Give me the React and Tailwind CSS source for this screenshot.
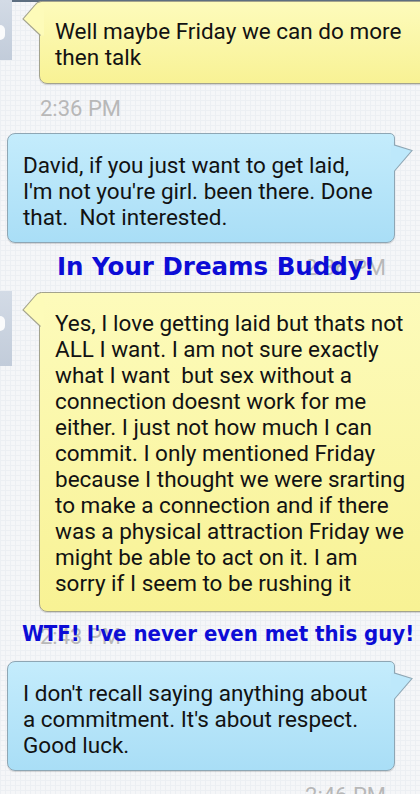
import React from 'react';

const textFont = { fontFamily: 'Roboto, "Noto Sans", sans-serif' };

const Avatar = ({ h, headTop }) => (
    <div className={`relative w-[12px] shrink-0 bg-gradient-to-b from-[#d3dbe6] to-[#c2ccda] ${h}`}>
        <div className={`absolute left-0 w-[5px] h-[15px] rounded-r-full bg-white/90 ${headTop}`}></div>
    </div>
);

// incoming message, yellow bubble with a tail on the left
const YellowBubble = ({ lines, avatarH, headTop, pad }) => (
    <div className="flex items-start">
        <Avatar h={avatarH} headTop={headTop} />
        <div className={`relative ml-[27px] mr-[-12px] flex-1 rounded-[8px] rounded-tl-[3px] border border-[#a3a38d] bg-gradient-to-b from-[#fdfbbb] to-[#f8f294] pl-[15px] pr-4 shadow-[0_1px_1px_rgba(0,0,0,0.15)] ${pad}`}>
            <svg className="absolute left-[-18px] top-[-1px]" width="22" height="40" viewBox="0 0 22 40">
                <path d="M22 1 L19 1 Q15 1 13 4 L1 18 L18.5 34.5 L22 34.5 Z" fill="#fdfbb9" />
                <path d="M19 0.5 Q15 0.8 13 4 L1 18 L18.5 34.5" fill="none" stroke="#a3a38d" strokeWidth="1.1" />
            </svg>
            <p className="text-[22.5px] leading-[26px] text-[#121212]" style={textFont}>
                {lines.map((l, i) => <span key={i} className="block whitespace-pre">{l}</span>)}
            </p>
        </div>
    </div>
);

// outgoing message, blue bubble with a tail on the right
const BlueBubble = ({ lines }) => (
    <div className="flex">
        <div className="relative ml-[7px] w-[388px] rounded-[8px] rounded-tr-[5px] border border-[#8ea6b4] bg-gradient-to-b from-[#c4ecfc] to-[#a9def6] pl-[15px] pr-3 pt-[18px] pb-[12px] shadow-[0_1px_1px_rgba(0,0,0,0.15)]">
            <svg className="absolute right-[-19px] top-[-1px]" width="22" height="42" viewBox="0 0 22 42">
                <path d="M0 12 L3.5 12 L21 17.5 L3.5 38 L0 38 Z" fill="#bde8fb" />
                <path d="M3.5 9 L3.5 12 L21 17.5 L3.5 38" fill="none" stroke="#8ea6b4" strokeWidth="1.1" />
            </svg>
            <p className="text-[22.5px] leading-[26px] text-[#121212]" style={textFont}>
                {lines.map((l, i) => <span key={i} className="block whitespace-pre">{l}</span>)}
            </p>
        </div>
    </div>
);

const TimeRow = ({ time, side, sticker, stickerClass, stickerFont }) => (
    <div className="grid h-[49px] items-center">
        <span
            className={`[grid-area:1/1] text-[22px] text-[#b8b8b8] ${side === 'left' ? 'pl-[40px]' : 'justify-self-end pr-[34px]'}`}
            style={textFont}
        >
            {time}
        </span>
        {sticker && (
            <span className={`[grid-area:1/1] font-bold text-[#0c0cd6] whitespace-nowrap ${stickerClass}`} style={{ fontFamily: stickerFont }}>
                {sticker}
            </span>
        )}
    </div>
);

export default function App() {
    return (
        <div className="relative w-[420px] h-[794px] overflow-hidden bg-[#f5f6f8] bg-[image:linear-gradient(#eceff3_1px,transparent_1px),linear-gradient(90deg,#eceff3_1px,transparent_1px)] bg-[size:5px_5px]">
            <div className="absolute top-0 left-0 right-0 h-[2px] bg-[#5d6e80]"></div>
            <div className="pt-[1px]">
                <YellowBubble
                    avatarH="h-[60px] -mt-[1px]"
                    headTop="top-[25px]"
                    pad="pt-[16px] pb-[13px]"
                    lines={['Well maybe Friday we can do more', 'then talk']}
                />
                <TimeRow time="2:36 PM" side="left" />
                <BlueBubble
                    lines={["David, if you just want to get laid,", "I'm not you're girl. been there. Done", 'that.  Not interested.']}
                />
                <TimeRow
                    time="2:36 PM"
                    side="right"
                    sticker="In Your Dreams Buddy!"
                    stickerClass="pl-[57px] text-[24.5px]"
                    stickerFont='"DejaVu Sans", sans-serif'
                />
                <YellowBubble
                    avatarH="h-[75px] -mt-[1px]"
                    headTop="top-[25px]"
                    pad="pt-[17px] pb-[15px]"
                    lines={[
                        'Yes, I love getting laid but thats not',
                        'ALL I want. I am not sure exactly',
                        'what I want  but sex without a',
                        'connection doesnt work for me',
                        'either. I just not how much I can',
                        'commit. I only mentioned Friday',
                        'because I thought we were srarting',
                        'to make a connection and if there',
                        'was a physical attraction Friday we',
                        'might be able to act on it. I am',
                        'sorry if I seem to be rushing it',
                    ]}
                />
                <TimeRow
                    time="2:43 PM"
                    side="left"
                    sticker="WTF! I've never even met this guy!"
                    stickerClass="pl-[22px] text-[22px] -mt-[6px]"
                    stickerFont='"DejaVu Sans Condensed", "DejaVu Sans", sans-serif'
                />
                <BlueBubble
                    lines={["I don't recall saying anything about", "a commitment. It's about respect.", 'Good luck.']}
                />
                <TimeRow time="2:46 PM" side="right" />
            </div>
        </div>
    );
}
